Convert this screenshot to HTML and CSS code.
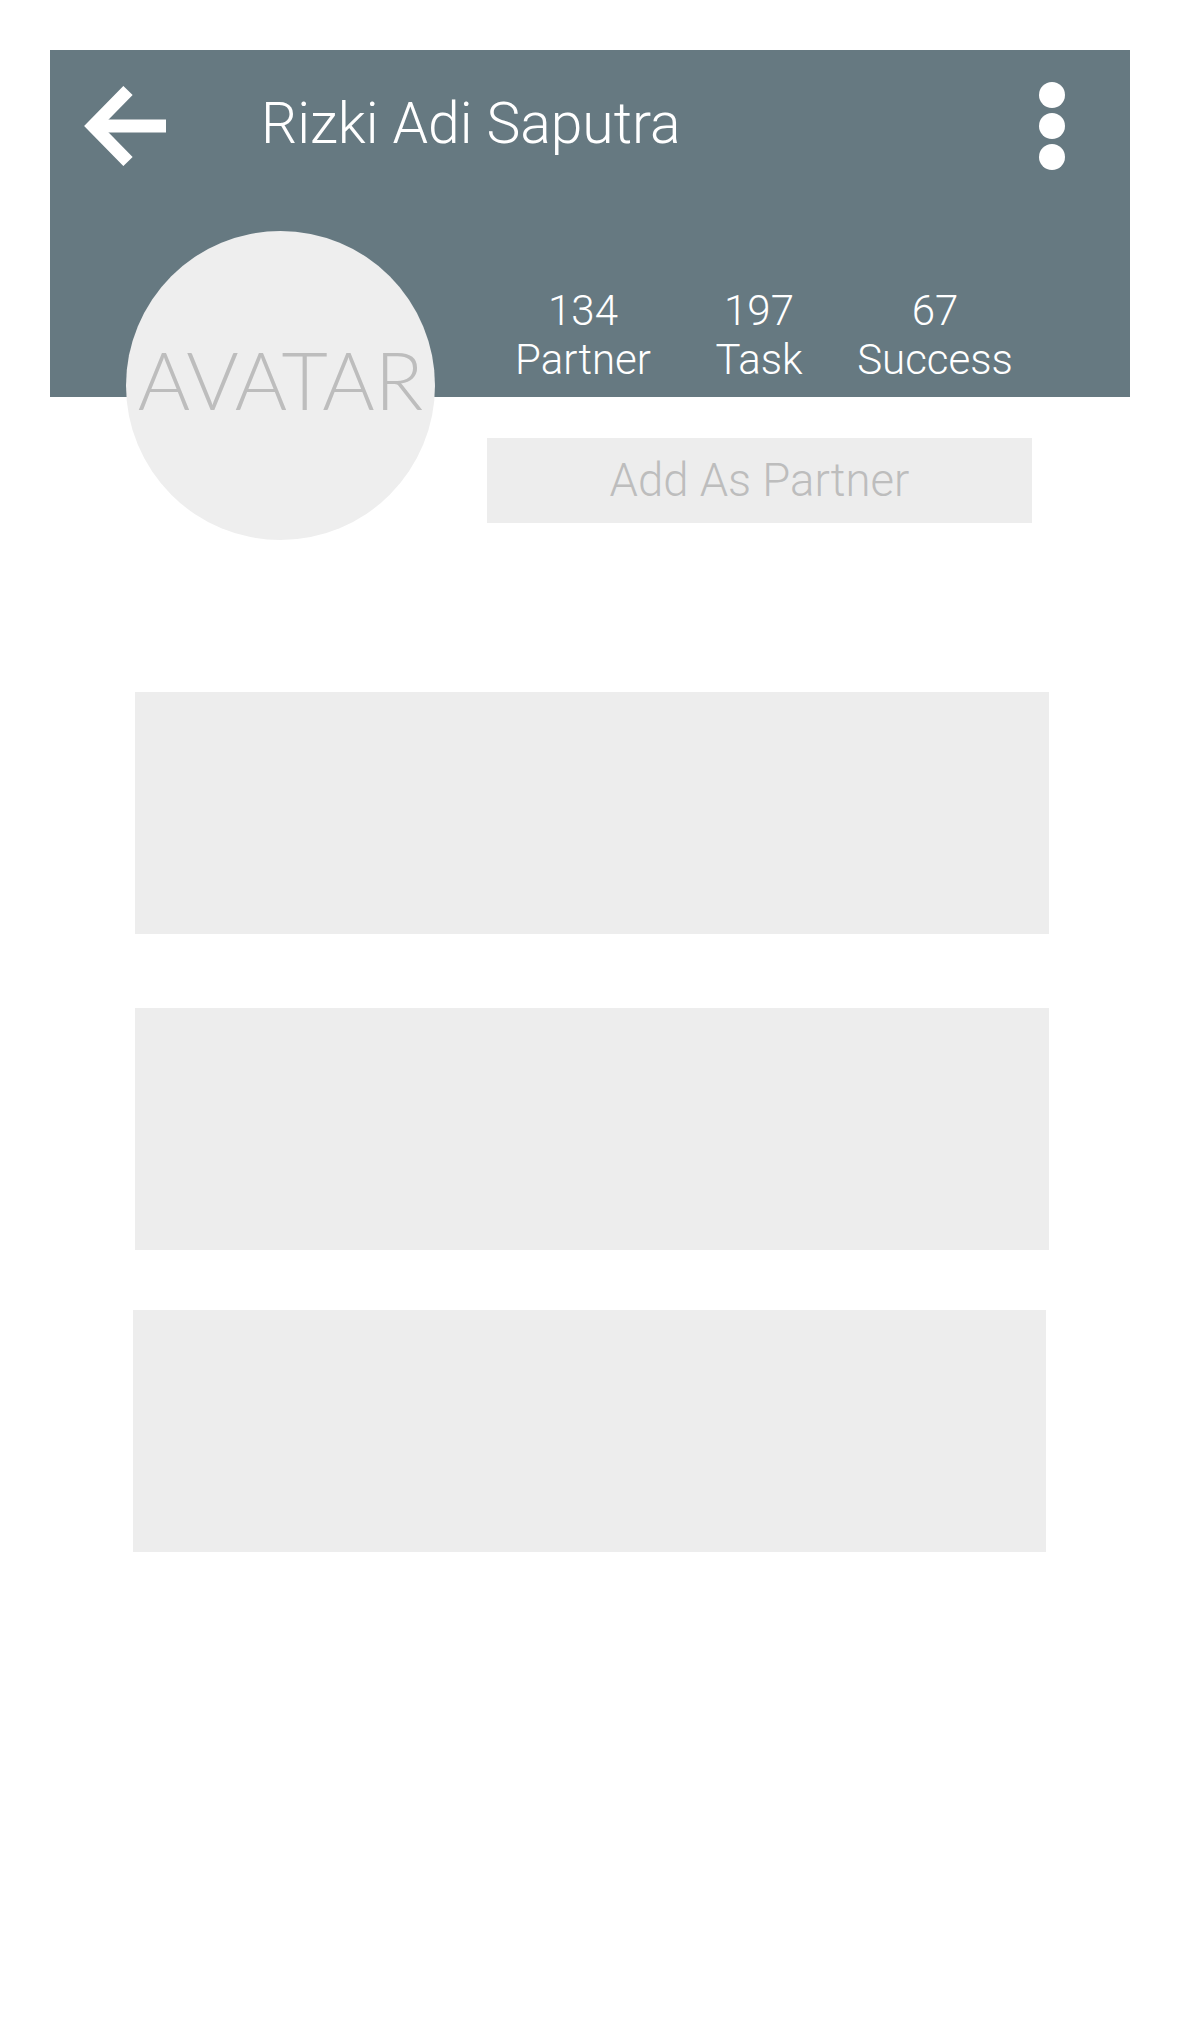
FILE: index.html
```html
<!DOCTYPE html>
<html lang="en">
<head>
<meta charset="utf-8">
<title>Profile</title>
<link rel="stylesheet" href="styles.css">
</head>
<body>
<div class="page">
  <header class="header">
    <div class="topbar">
      <svg class="back" width="82" height="80" viewBox="0 0 82 80" aria-hidden="true">
        <polyline points="44,4.5 9.2,40 44,75.5" fill="none" stroke="#fff" stroke-width="13" stroke-linejoin="miter" stroke-miterlimit="4"/>
        <line x1="9" y1="40" x2="82" y2="40" stroke="#fff" stroke-width="13"/>
      </svg>
      <h1 class="title">Rizki Adi Saputra</h1>
      <svg class="more" width="26" height="88" viewBox="0 0 26 88" aria-hidden="true">
        <circle cx="13" cy="13" r="13" fill="#fff"/>
        <circle cx="13" cy="44" r="13" fill="#fff"/>
        <circle cx="13" cy="75" r="13" fill="#fff"/>
      </svg>
    </div>
    <div class="hero">
      <div class="avatar"><span>AVATAR</span></div>
      <div class="stats">
        <div class="stat"><span>134</span><span>Partner</span></div>
        <div class="stat"><span>197</span><span>Task</span></div>
        <div class="stat"><span>67</span><span>Success</span></div>
      </div>
    </div>
  </header>
  <div class="actions">
    <button class="add-btn" type="button">Add As Partner</button>
  </div>
  <section class="cards">
    <div class="card card-1"></div>
    <div class="card card-2"></div>
    <div class="card card-3"></div>
  </section>
</div>
</body>
</html>
```

FILE: styles.css
```css
html, body {
  margin: 0;
  padding: 0;
  background: #ffffff;
}

body {
  font-family: Roboto, "Liberation Sans", sans-serif;
  width: 1180px;
  height: 2020px;
  overflow: hidden;
}

.page {
  padding: 50px 50px 0 50px;
}

.header {
  height: 347px;
  box-sizing: border-box;
  background: #667981;
  padding-top: 36px;
  display: flex;
  flex-direction: column;
}

.topbar {
  display: flex;
  align-items: center;
  height: 80px;
  padding-left: 34px;
  padding-right: 65px;
}

.back {
  display: block;
  flex-shrink: 0;
}

.title {
  margin: 0 0 4px 95px;
  font-weight: 300;
  font-size: 57px;
  color: #ffffff;
  line-height: 1.2;
  flex: 1;
}

.more {
  display: block;
  flex-shrink: 0;
}

.hero {
  display: flex;
  align-items: flex-start;
  margin-top: 65px;
  height: 0;
}

.avatar {
  flex-shrink: 0;
  width: 309px;
  height: 309px;
  margin-left: 76px;
  border-radius: 50%;
  background: #eeeeee;
  display: flex;
  align-items: center;
  justify-content: center;
}

.avatar span {
  font-family: Lato, "Open Sans", sans-serif;
  font-weight: 300;
  font-size: 80px;
  color: #bdbdbd;
  line-height: 1;
  margin-bottom: 14px;
}

.stats {
  display: flex;
  margin-left: 60px;
  margin-top: 55px;
  width: 528px;
}

.stat {
  width: 176px;
  display: flex;
  flex-direction: column;
  align-items: center;
  color: #ffffff;
  font-weight: 300;
  font-size: 42px;
  line-height: 49px;
}

.actions {
  margin-top: 41px;
  padding-left: 437px;
}

.add-btn {
  display: block;
  width: 545px;
  height: 85px;
  border: 0;
  padding: 0;
  margin: 0;
  background: #ededed;
  color: #bdbdbd;
  font-family: Roboto, "Liberation Sans", sans-serif;
  font-weight: 300;
  font-size: 45.5px;
  line-height: 85px;
  text-align: center;
}

.cards {
  display: flex;
  flex-direction: column;
}

.card {
  height: 242px;
  width: 914px;
  background: #ededed;
}

.card-1 {
  margin-top: 169px;
  margin-left: 85px;
}

.card-2 {
  margin-top: 74px;
  margin-left: 85px;
}

.card-3 {
  margin-top: 60px;
  margin-left: 83px;
  width: 913px;
}
```
